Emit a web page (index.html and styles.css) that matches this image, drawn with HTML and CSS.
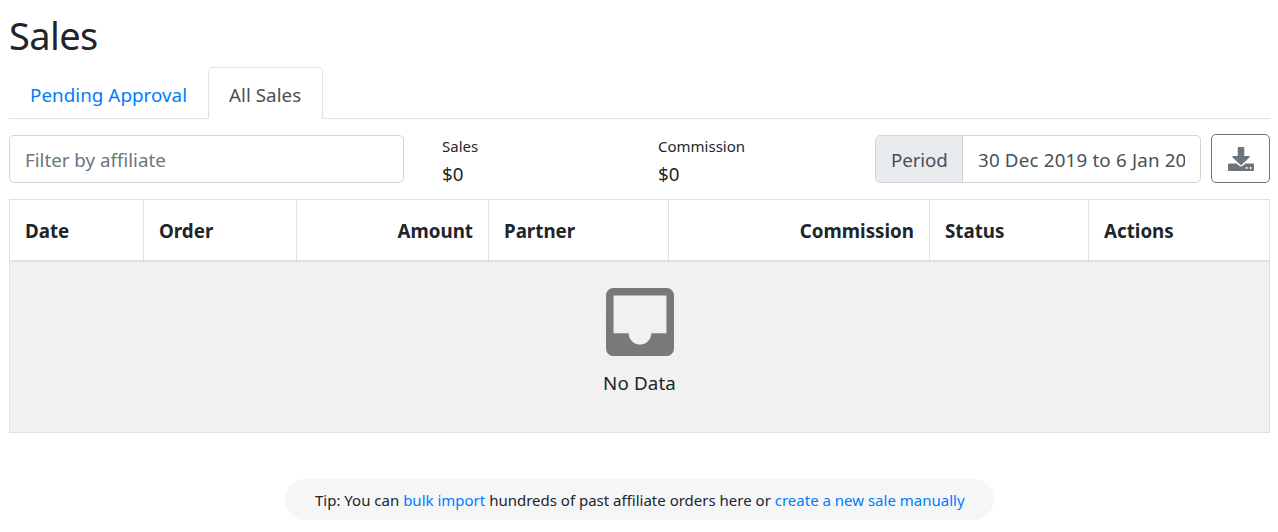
FILE: index.html
```
<!DOCTYPE html>
<html lang="en">
<head>
<meta charset="utf-8">
<title>Sales</title>
<link rel="stylesheet" href="styles.css">
</head>
<body>
<main class="page">
  <h1 class="title">Sales</h1>
  <nav class="tabs">
    <a class="tab tab-pending">Pending Approval</a>
    <a class="tab tab-active">All Sales</a>
  </nav>
  <section class="toolbar">
    <div class="field filter">Filter by affiliate</div>
    <div class="stat stat-sales"><span class="stat-label">Sales</span><span class="stat-value">$0</span></div>
    <div class="stat stat-commission"><span class="stat-label">Commission</span><span class="stat-value">$0</span></div>
    <div class="period">
      <span class="period-label">Period</span>
      <div class="period-field"><div class="period-value">30 Dec 2019 to 6 Jan 2020</div></div>
    </div>
    <button class="download" aria-label="Download">
      <svg class="download-icon" viewBox="0 0 512 512" preserveAspectRatio="none"><path fill="currentColor" d="M216 0h80c13.3 0 24 10.7 24 24v168h87.7c17.8 0 26.7 21.5 14.1 34.1L269.7 378.3c-7.5 7.5-19.8 7.5-27.3 0L90.1 226.1c-12.6-12.6-3.7-34.1 14.1-34.1H192V24c0-13.3 10.7-24 24-24zm296 376v112c0 13.3-10.7 24-24 24H24c-13.3 0-24-10.7-24-24V376c0-13.3 10.7-24 24-24h146.7l49 49c20.1 20.1 52.5 20.1 72.6 0l49-49H488c13.3 0 24 10.7 24 24zm-124 72c0-11-9-20-20-20s-20 9-20 20 9 20 20 20 20-9 20-20zm76 0c0-11-9-20-20-20s-20 9-20 20 9 20 20 20 20-9 20-20z"/></svg>
    </button>
  </section>
  <section class="table">
    <div class="head">
      <div class="cell">Date</div>
      <div class="cell">Order</div>
      <div class="cell right">Amount</div>
      <div class="cell">Partner</div>
      <div class="cell right">Commission</div>
      <div class="cell">Status</div>
      <div class="cell">Actions</div>
    </div>
    <div class="empty">
      <svg class="empty-icon" viewBox="3 3 18 18"><path fill="currentColor" d="M19 3H4.99c-1.11 0-1.98.89-1.98 2L3 19c0 1.1.88 2 1.99 2H19c1.1 0 2-.9 2-2V5c0-1.11-.9-2-2-2zm0 12h-4c0 1.66-1.35 3-3 3s-3-1.34-3-3H4.99V5H19v10z"/></svg>
      <span class="empty-text">No Data</span>
    </div>
  </section>
  <p class="tip">Tip: You can <a class="link">bulk import</a> hundreds of past affiliate orders here or <a class="link">create a new sale manually</a></p>
</main>
</body>
</html>
```
FILE: styles.css
```
* { box-sizing: border-box; }
body {
  margin: 0;
  background: #fff;
  color: #212529;
  font: 18.75px/30px "Noto Sans", "Open Sans", sans-serif;
}
.page { display: flex; flex-direction: column; padding: 11px 8px 0 9px; height: 532px; overflow: hidden; }
.title { margin: 0 0 8px; font-size: 38px; line-height: 48px; font-weight: 400; letter-spacing: -0.6px; }
.tabs { display: flex; height: 52px; border-bottom: 1px solid #dee2e6; }
.tab { height: 52px; padding: 12px 20px 0; border: 1px solid transparent; border-radius: 5px 5px 0 0; color: #007bff; white-space: nowrap; letter-spacing: 0.06px; }
.tab-pending { width: 199px; }
.tab-active { width: 115px; color: #495057; background: #fff; border-color: #dee2e6 #dee2e6 #fff; }
.toolbar { display: flex; align-items: flex-end; height: 64px; }
.filter { width: 395px; height: 48px; padding: 9px 15px; border: 1px solid #ced4da; border-radius: 5px; color: #6c757d; line-height: 30px; }
.stat { display: flex; flex-direction: column; height: 52px; white-space: nowrap; }
.stat-sales { width: 178px; margin-left: 38px; }
.stat-commission { width: 179px; margin-left: 38px; }
.stat-label { font-size: 15px; line-height: 30px; height: 28px; }
.period { display: flex; width: 326px; height: 48px; margin-left: 38px; color: #495057; border: 1px solid #ced4da; border-radius: 5px; overflow: hidden; }
.period-label { width: 87px; padding: 9px 0 0 15px; background: #e9ecef; border-right: 1px solid #ced4da; letter-spacing: -0.1px; }
.period-field { flex: 1; padding: 9px 15px; min-width: 0; }
.period-value { overflow: hidden; white-space: nowrap; letter-spacing: 0.18px; }
.download { display: flex; align-items: center; justify-content: center; width: 59px; height: 49px; margin: 0 0 0 10px; padding: 0; border: 1px solid #6c757d; border-radius: 5px; background: #fff; color: #6c757d; }
.download-icon { width: 26px; height: 24px; }
.table { margin-top: 16px; height: 234px; border: 1px solid #dee2e6; width: 1261px; }
.head { display: grid; grid-template-columns: 134px 153px 192px 180px 261px 159px 180px; height: 62px; border-bottom: 2px solid #dee2e6; font-weight: 700; }
.cell { padding: 16px 15px 0; border-right: 1px solid #dee2e6; }
.cell:last-child { border-right: 0; }
.right { text-align: right; }
.empty { display: flex; flex-direction: column; align-items: center; height: 170px; padding-top: 26px; background: #f1f1f1; }
.empty-icon { width: 68px; height: 68px; color: #797979; }
.empty-text { margin-top: 12px; letter-spacing: 0.15px; }
.tip { align-self: center; margin: 46px 0 0; width: 709px; height: 41px; padding: 6px 30px; border-radius: 21px; background: #f4f6f8; font-size: 15px; white-space: nowrap; }
.link { color: #007bff; }
```
